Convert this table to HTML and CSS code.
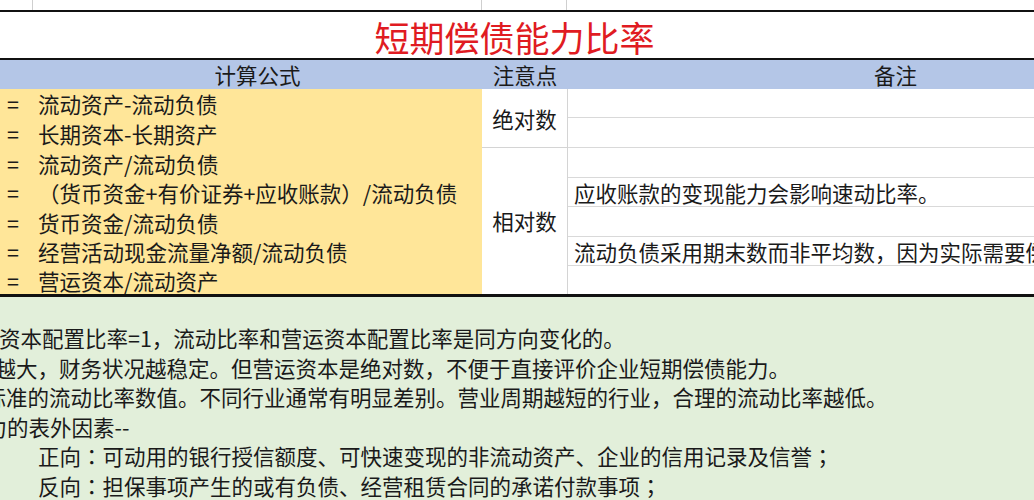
FILE: index.html
```html
<!DOCTYPE html>
<html lang="zh-CN">
<head>
<meta charset="utf-8">
<title>短期偿债能力比率</title>
<link rel="stylesheet" href="styles.css">
</head>
<body>
<div class="sheet">
  <div class="toprow">
    <div class="tc tc0"></div>
    <div class="tc tc1"></div>
    <div class="tc tc2"></div>
    <div class="tc tc3"></div>
  </div>
  <div class="title"><span>短期偿债能力比率</span></div>
  <div class="grid">
    <div class="hd hd-formula">计算公式</div>
    <div class="hd hd-note">注意点</div>
    <div class="hd hd-remark">备注</div>

    <div class="f r1"><span class="eq">=</span><span class="ft">流动资产-流动负债</span></div>
    <div class="f r2"><span class="eq">=</span><span class="ft">长期资本-长期资产</span></div>
    <div class="f r3"><span class="eq">=</span><span class="ft">流动资产/流动负债</span></div>
    <div class="f r4"><span class="eq">=</span><span class="ft">（货币资金+有价证券+应收账款）/流动负债</span></div>
    <div class="f r5"><span class="eq">=</span><span class="ft">货币资金/流动负债</span></div>
    <div class="f r6"><span class="eq">=</span><span class="ft">经营活动现金流量净额/流动负债</span></div>
    <div class="f r7"><span class="eq">=</span><span class="ft">营运资本/流动资产</span></div>

    <div class="kind kind-abs">绝对数</div>
    <div class="kind kind-rel">相对数</div>

    <div class="rm r1"></div>
    <div class="rm r2"></div>
    <div class="rm r3"></div>
    <div class="rm r4">应收账款的变现能力会影响速动比率。</div>
    <div class="rm r5"></div>
    <div class="rm r6">流动负债采用期末数而非平均数，因为实际需要偿还的是期末金额。</div>
    <div class="rm r7 last"></div>
  </div>
  <div class="notes">
    <div class="nl n1">资本配置比率=1，流动比率和营运资本配置比率是同方向变化的。</div>
    <div class="nl n2">越大，财务状况越稳定。但营运资本是绝对数，不便于直接评价企业短期偿债能力。</div>
    <div class="nl n3">标准的流动比率数值。不同行业通常有明显差别。营业周期越短的行业，合理的流动比率越低。</div>
    <div class="nl n4">力的表外因素--</div>
    <div class="nl n5">正向<span class="pc" lang="zh-TW">：</span>可动用的银行授信额度、可快速变现的非流动资产、企业的信用记录及信誉<span class="pc" lang="zh-TW">；</span></div>
    <div class="nl n6">反向<span class="pc" lang="zh-TW">：</span>担保事项产生的或有负债、经营租赁合同的承诺付款事项<span class="pc" lang="zh-TW">；</span></div>
  </div>
</div>
</body>
</html>
```
FILE: styles.css
```css
html, body {
  margin: 0;
  padding: 0;
  background: #ffffff;
}
body {
  width: 1034px;
  height: 500px;
  overflow: hidden;
  font-family: "Noto Sans CJK SC", "Noto Sans", sans-serif;
  color: #1a1a1a;
}
.sheet {
  width: 1034px;
  height: 500px;
  display: flex;
  flex-direction: column;
  overflow: hidden;
}
.toprow {
  height: 10px;
  display: flex;
  border-bottom: 2px solid #111;
  flex: none;
}
.tc {
  height: 10px;
  box-sizing: border-box;
}
.tc0 { width: 33px; border-right: 1px solid #cfcfcf; }
.tc1 { width: 449px; border-right: 1px solid #cfcfcf; }
.tc2 { width: 85px; border-right: 1px solid #cfcfcf; }
.tc3 { flex: 1; }

.title {
  flex: none;
  border-bottom: 2px solid #111;
  display: flex;
  align-items: center;
  justify-content: center;
  padding-right: 5px;
  padding-top: 4px;
  height: 42px;
}
.title span {
  font-size: 35px;
  line-height: 40px;
  color: #e01b22;
}

.grid {
  flex: none;
  display: grid;
  grid-template-columns: 482px 86px 1fr;
  grid-template-rows: 29px 29px 30px 30px 29px 30px 29px 28px;
  border-bottom: 3px solid #111;
  font-size: 21.5px;
}
.hd {
  background: #b4c6e7;
  display: flex;
  align-items: center;
  justify-content: center;
  line-height: 29px;
  white-space: nowrap;
}
.hd-formula { grid-column: 1; grid-row: 1; padding-left: 33px; }
.hd-note { grid-column: 2; grid-row: 1; }
.hd-remark { grid-column: 3; grid-row: 1; justify-content: flex-start; padding-left: 306px; }

.f {
  grid-column: 1;
  background: #ffe699;
  display: flex;
  align-items: center;
  white-space: nowrap;
}
.eq {
  width: 38px;
  padding-left: 7px;
  box-sizing: border-box;
  flex: none;
}
.ft { flex: none; }

.r1 { grid-row: 2; }
.r2 { grid-row: 3; }
.r3 { grid-row: 4; }
.r4 { grid-row: 5; }
.r5 { grid-row: 6; }
.r6 { grid-row: 7; }
.r7 { grid-row: 8; }

.kind {
  grid-column: 2;
  background: #fff;
  border-right: 1px solid #d4d4d4;
  display: flex;
  align-items: center;
  justify-content: center;
  white-space: nowrap;
}
.kind-abs { grid-row: 2 / 4; border-bottom: 1px solid #d4d4d4; }
.kind-rel { grid-row: 4 / 9; padding-bottom: 2px; }

.rm {
  grid-column: 3;
  background: #fff;
  border-bottom: 1px solid #d9d9d9;
  display: flex;
  align-items: center;
  padding-left: 6px;
  white-space: nowrap;
  overflow: hidden;
}
.rm.last { border-bottom: none; }

.notes {
  flex: 1;
  background: #e2efda;
  padding-top: 26px;
  font-size: 21.5px;
  line-height: 29.5px;
  color: #1a1a1a;
}
.nl {
  white-space: nowrap;
}
.pc {
  font-family: "Noto Sans CJK TC", "Noto Sans CJK JP", sans-serif;
}
.n1 { text-indent: -1px; }
.n2 { text-indent: -5.5px; }
.n3 { text-indent: -15.5px; }
.n4 { text-indent: -14.5px; }
.n5, .n6 { text-indent: 38px; }
```
